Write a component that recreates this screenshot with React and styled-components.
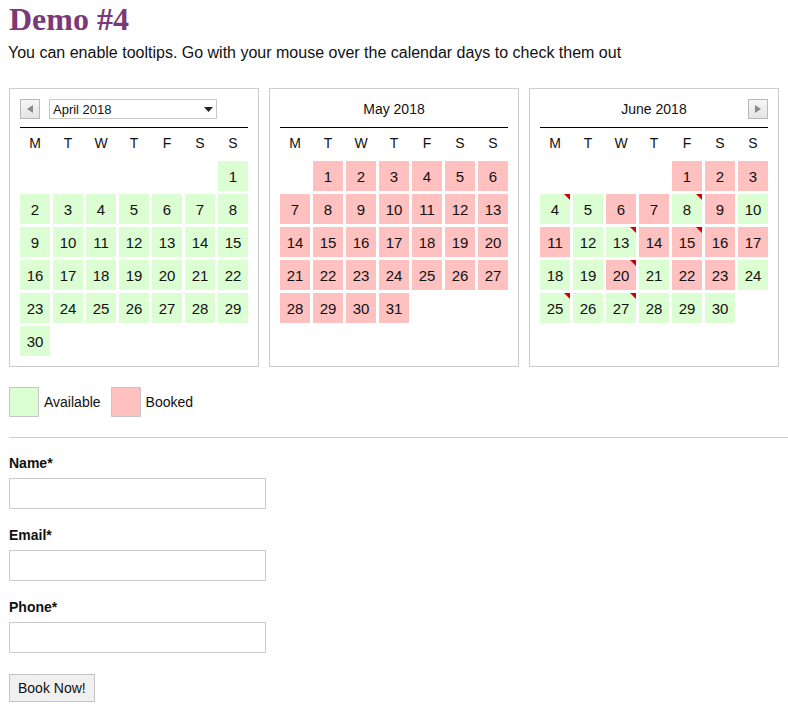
import React from 'react'
import styled, { createGlobalStyle } from 'styled-components'

const Global = createGlobalStyle`
  body {
    margin: 0;
    font-family: "Liberation Sans", Arial, sans-serif;
    color: #111;
    background: #fff;
  }
`

const Page = styled.div`
  padding: 0 0 0 9px;
  width: 779px;
`

const Title = styled.h1`
  margin: 0;
  padding-top: 2px;
  font-family: "Liberation Serif", "DejaVu Serif", serif;
  font-weight: bold;
  font-size: 32px;
  line-height: 34px;
  color: #7b3a77;
`

const Intro = styled.p`
  margin: 7px 0 0 -1px;
  font-size: 16px;
  line-height: 20px;
`

const Calendars = styled.div`
  display: flex;
  gap: 10px;
  margin-top: 25px;
`

const Box = styled.div`
  width: 228px;
  padding: 10px;
  border: 1px solid #cccccc;
`

const Head = styled.div`
  position: relative;
  height: 20px;
  padding-bottom: 8px;
  border-bottom: 1px solid #000;
  display: flex;
  align-items: center;
  justify-content: center;
  font-size: 14px;
`

const NavButton = styled.div`
  position: absolute;
  top: 0;
  ${(p) => (p.$side === 'left' ? 'left: 0;' : 'right: 0;')}
  width: 18px;
  height: 18px;
  border: 1px solid #b8b8b8;
  background: linear-gradient(#f6f6f6, #e4e4e4);
  display: flex;
  align-items: center;
  justify-content: center;
`

const Select = styled.div`
  position: absolute;
  top: 0;
  left: 29px;
  width: 160px;
  height: 18px;
  padding: 0 3px;
  border: 1px solid #c8c8c8;
  background: #fff;
  display: flex;
  align-items: center;
  justify-content: space-between;
  font-size: 13px;
`

const Grid = styled.div`
  display: grid;
  grid-template-columns: repeat(7, 30px);
  grid-template-rows: repeat(7, 30px);
  gap: 3px;
`

const Weekday = styled.div`
  display: flex;
  align-items: center;
  justify-content: center;
  font-size: 14px;
`

const Day = styled.div`
  position: relative;
  display: flex;
  align-items: center;
  justify-content: center;
  font-size: 15px;
  background: ${(p) => (p.$booked ? '#ffc0c0' : '#dcfed3')};
  grid-column: ${(p) => p.$col || 'auto'};

  ${(p) =>
    p.$mark &&
    `&::after {
      content: '';
      position: absolute;
      top: 0;
      right: 0;
      border-top: 6px solid #cc0000;
      border-left: 6px solid transparent;
    }`}
`

const Legend = styled.div`
  display: flex;
  align-items: center;
  margin-top: 20px;
  font-size: 14px;
`

const Swatch = styled.span`
  width: 28px;
  height: 28px;
  border: 1px solid #c6c6c6;
  background: ${(p) => (p.$booked ? '#ffc0c0' : '#dcfed3')};
  margin-right: 5px;
`

const LegendText = styled.span`
  margin-right: 10px;
`

const Rule = styled.hr`
  margin: 20px 0 0;
  border: 0;
  border-top: 1px solid #cccccc;
  width: 779px;
`

const Form = styled.form`
  padding-top: 17px;
`

const Label = styled.label`
  display: block;
  font-size: 14px;
  font-weight: bold;
  line-height: 16px;
  margin-bottom: 7px;
`

const Input = styled.input`
  display: block;
  box-sizing: border-box;
  width: 257px;
  height: 31px;
  margin: 0 0 18px;
  border: 1px solid #cccccc;
  outline: none;
`

const Button = styled.button`
  display: block;
  margin-top: 21px;
  height: 28px;
  padding: 0 8px;
  font-family: "Liberation Sans", Arial, sans-serif;
  font-size: 14px;
  color: #111;
  background: #f0f0f0;
  border: 1px solid #c4c4c4;
`

const weekdays = ['M', 'T', 'W', 'T', 'F', 'S', 'S']

const juneBooked = [1, 2, 3, 6, 7, 9, 11, 14, 15, 16, 17, 20, 22, 23]
const juneMarks = [4, 8, 13, 15, 20, 25, 27]

const months = [
  { name: 'April 2018', start: 7, days: 30, booked: () => false, marks: [], nav: 'left' },
  { name: 'May 2018', start: 2, days: 31, booked: () => true, marks: [] },
  { name: 'June 2018', start: 5, days: 30, booked: (d) => juneBooked.includes(d), marks: juneMarks, nav: 'right' },
]

function Arrow({ dir }) {
  return (
    <svg width="6" height="8" viewBox="0 0 6 8">
      <path d={dir === 'left' ? 'M6 0 L0 4 L6 8 Z' : 'M0 0 L6 4 L0 8 Z'} fill="#8a8a8a" />
    </svg>
  )
}

function Calendar({ month }) {
  const days = Array.from({ length: month.days }, (_, i) => i + 1)
  return (
    <Box>
      <Head>
        {month.nav === 'left' ? (
          <>
            <NavButton $side="left">
              <Arrow dir="left" />
            </NavButton>
            <Select>
              <span>{month.name}</span>
              <svg width="9" height="5" viewBox="0 0 9 5">
                <path d="M0 0 L9 0 L4.5 5 Z" fill="#222" />
              </svg>
            </Select>
          </>
        ) : (
          <span>{month.name}</span>
        )}
        {month.nav === 'right' && (
          <NavButton $side="right">
            <Arrow dir="right" />
          </NavButton>
        )}
      </Head>
      <Grid>
        {weekdays.map((w, i) => (
          <Weekday key={i}>{w}</Weekday>
        ))}
        {days.map((d) => (
          <Day
            key={d}
            $col={d === 1 ? month.start : null}
            $booked={month.booked(d)}
            $mark={month.marks.includes(d)}
          >
            {d}
          </Day>
        ))}
      </Grid>
    </Box>
  )
}

export default function App() {
  return (
    <Page>
      <Global />
      <Title>Demo #4</Title>
      <Intro>You can enable tooltips. Go with your mouse over the calendar days to check them out</Intro>
      <Calendars>
        {months.map((m) => (
          <Calendar key={m.name} month={m} />
        ))}
      </Calendars>
      <Legend>
        <Swatch />
        <LegendText>Available</LegendText>
        <Swatch $booked />
        <LegendText>Booked</LegendText>
      </Legend>
      <Rule />
      <Form onSubmit={(e) => e.preventDefault()}>
        <Label>Name*</Label>
        <Input type="text" />
        <Label>Email*</Label>
        <Input type="text" />
        <Label>Phone*</Label>
        <Input type="text" />
        <Button type="submit">Book Now!</Button>
      </Form>
    </Page>
  )
}
